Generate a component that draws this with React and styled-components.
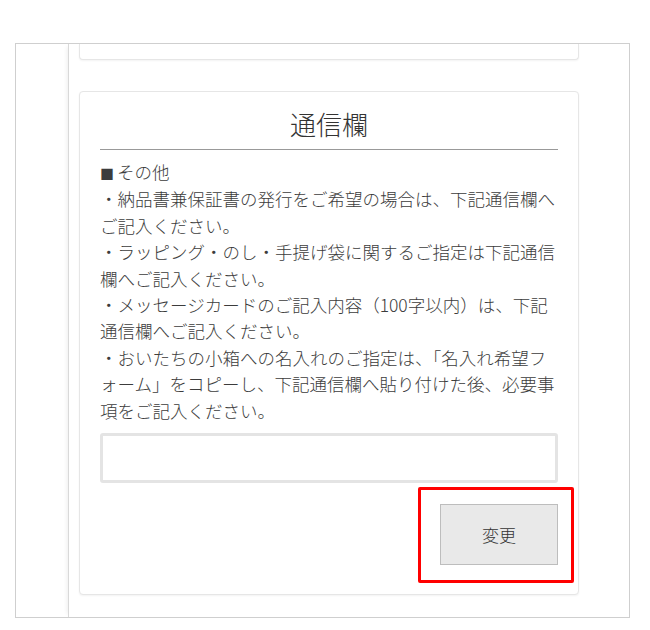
import React from 'react'
import styled, { createGlobalStyle } from 'styled-components'

const GlobalStyle = createGlobalStyle`
  body {
    margin: 0;
    background: #fff;
    font-family: "Noto Sans CJK JP", "Noto Sans", sans-serif;
    color: #3c3c3c;
  }
`

const Frame = styled.div`
  box-sizing: border-box;
  margin: 43px 0 0 15px;
  width: 615px;
  height: 575px;
  border: 1px solid #cfcfcf;
  display: flex;
  overflow: hidden;
`

const Column = styled.div`
  margin-left: 52px;
  padding-left: 10px;
  border-left: 1px solid #d9d9d9;
  box-shadow: -4px 0 4px -3px rgba(0, 0, 0, 0.07);
  display: flex;
  flex-direction: column;
`

const Card = styled.div`
  box-sizing: border-box;
  width: 500px;
  background: #fff;
  border: 1px solid #e6e6e6;
  border-radius: ${p => (p.$cut ? '0 0 4px 4px' : '4px')};
  border-top: ${p => (p.$cut ? 'none' : '1px solid #e6e6e6')};
  box-shadow: 0 1px 2px rgba(0, 0, 0, 0.05);
  height: ${p => (p.$cut ? '16px' : 'auto')};
  margin-bottom: ${p => (p.$cut ? '31px' : '0')};
  padding: ${p => (p.$cut ? '0' : '12px 20px 11px')};
`

const Title = styled.h2`
  margin: 0;
  font-size: 26px;
  font-weight: 300;
  line-height: 40px;
  text-align: center;
  padding-bottom: 5px;
  border-bottom: 1px solid #999;
  color: #333;
`

const Notes = styled.div`
  margin-top: 9px;
  font-size: 17.5px;
  font-weight: 300;
  line-height: 26.4px;
`

const Line = styled.p`
  margin: 0;
`

const Square = styled.span`
  font-size: 14px;
  margin-right: 3px;
`

const Memo = styled.textarea`
  display: block;
  box-sizing: border-box;
  width: 100%;
  height: 50px;
  margin-top: 9px;
  border: 3px solid #e4e4e4;
  border-radius: 3px;
  resize: none;
  outline: none;
  font-family: inherit;
`

const ButtonRow = styled.div`
  display: flex;
  justify-content: flex-end;
  margin: 4px -16px 0 0;
`

const Highlight = styled.div`
  border: 3px solid #ff0000;
  border-radius: 2px;
  padding: 14px 13px 15px 19px;
`

const Button = styled.button`
  width: 118px;
  height: 61px;
  background: #e9e9e9;
  border: 1px solid #bdbdbd;
  font-family: inherit;
  font-size: 17px;
  font-weight: 300;
  color: #333;
  cursor: pointer;
`

const lines = [
  '・納品書兼保証書の発行をご希望の場合は、下記通信欄へご記入ください。',
  '・ラッピング・のし・手提げ袋に関するご指定は下記通信欄へご記入ください。',
  '・メッセージカードのご記入内容（100字以内）は、下記通信欄へご記入ください。',
  '・おいたちの小箱への名入れのご指定は、「名入れ希望フォーム」をコピーし、下記通信欄へ貼り付けた後、必要事項をご記入ください。',
]

const App = () => (
  <>
    <GlobalStyle />
    <Frame>
      <Column>
        <Card $cut />
        <Card>
          <Title>通信欄</Title>
          <Notes>
            <Line>
              <Square>■</Square>その他
            </Line>
            {lines.map((t, i) => (
              <Line key={i}>{t}</Line>
            ))}
          </Notes>
          <Memo />
          <ButtonRow>
            <Highlight>
              <Button>変更</Button>
            </Highlight>
          </ButtonRow>
        </Card>
      </Column>
    </Frame>
  </>
)

export default App
